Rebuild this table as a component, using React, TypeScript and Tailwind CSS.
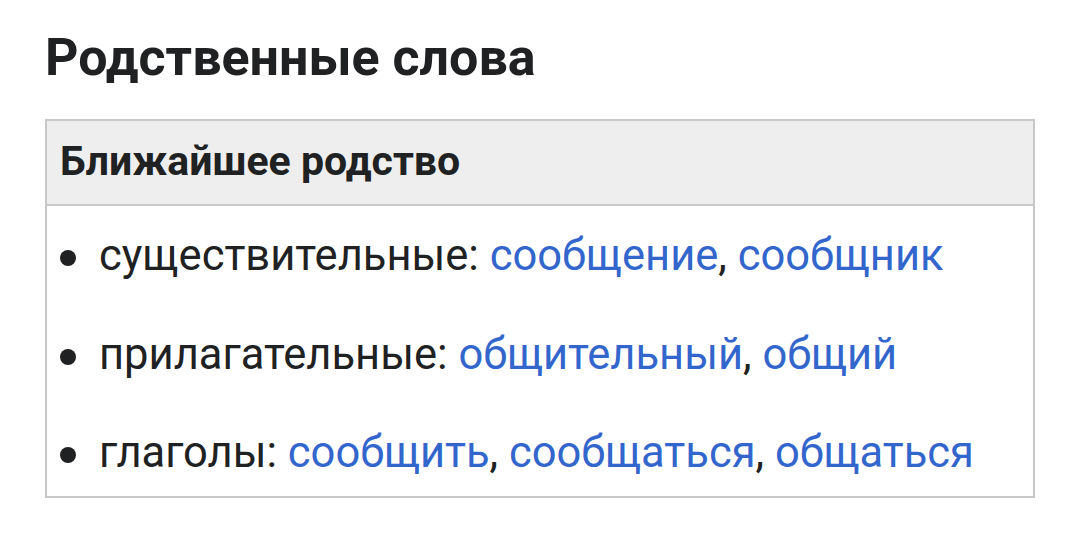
const rows = [
  { label: "существительные", links: ["сообщение", "сообщник"] },
  { label: "прилагательные", links: ["общительный", "общий"] },
  { label: "глаголы", links: ["сообщить", "сообщаться", "общаться"] },
];

export default function App() {
  return (
    <div
      className="w-[1080px] h-[540px] bg-white text-[#202122] pl-[45px] pr-[45px]"
      style={{ fontFamily: "Roboto, 'Noto Sans', sans-serif" }}
    >
      <h2 className="pt-[28px] text-[52px] font-bold leading-[60px]">
        Родственные слова
      </h2>

      <div className="mt-[31px] border-2 border-[#c8c8c8]">
        <div className="h-[85px] bg-[#eeeeee] border-b-2 border-[#c8c8c8] pl-[13px] pt-[20px]">
          <span className="block text-[41px] font-bold leading-none">
            Ближайшее родство
          </span>
        </div>
        <ul>
          {rows.map((row) => (
            <li
              key={row.label}
              className="flex items-start h-[98.5px] last:h-[93px] pt-[28px] text-[43.5px] leading-none"
            >
              <span className="w-[16px] h-[16px] mt-[16px] rounded-full bg-[#202122] ml-[13px] mr-[23px] shrink-0" />
              <span>
                {row.label}:{" "}
                {row.links.map((l, i) => (
                  <span key={l}>
                    <a href="#" className="text-[#3366cc]">
                      {l}
                    </a>
                    {i < row.links.length - 1 && ", "}
                  </span>
                ))}
              </span>
            </li>
          ))}
        </ul>
      </div>
    </div>
  );
}
